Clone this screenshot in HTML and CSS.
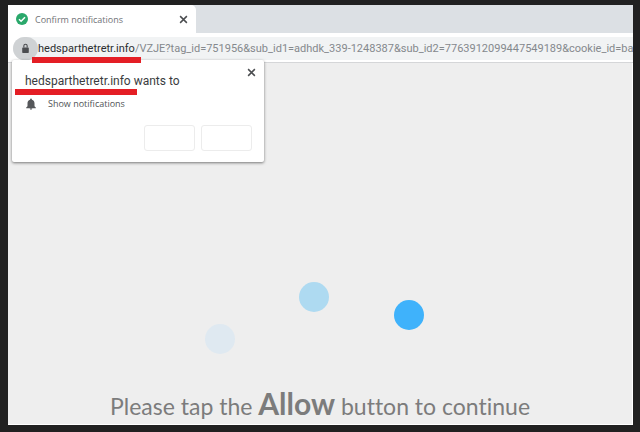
FILE: index.html
```
<!DOCTYPE html>
<html lang="en">

	<head>
		<meta charset="UTF-8">
		<meta name="viewport" content="width=device-width, initial-scale=1.0">
		<title>Confirm notifications</title>
		<link rel="stylesheet" href="styles.css">
	</head>

	<body>
		<div class="browser">

			<!-- tab strip -->
			<div class="tabs">
				<div class="tab">
					<svg class="tab-icon" viewBox="0 0 12 12">
						<circle cx="6" cy="6" r="6" fill="#2aa86b" />
						<path d="M3 6.2l2.1 2.1L9 4.2" fill="none" stroke="#fff" stroke-width="1.5" />
					</svg>
					<span class="tab-title">Confirm notifications</span>
					<button class="close" type="button" aria-label="Close tab">
						<svg viewBox="0 0 8 8"><path d="M1 1l6 6M7 1L1 7" /></svg>
					</button>
				</div>
			</div>

			<!-- address bar -->
			<div class="toolbar">
				<div class="address">
					<button class="lock" type="button" aria-label="Site information">
						<svg viewBox="0 0 8 10">
							<rect x="1" y="4" width="6" height="5" rx="0.6" fill="#4b4d50" />
							<path d="M2.5 4V2.6a1.5 1.5 0 0 1 3 0V4" fill="none" stroke="#4b4d50" />
						</svg>
					</button>
					<div class="url"><span class="host marked">hedsparthetretr.info</span>/VZJE?tag_id=751956&amp;sub_id1=adhdk_339-1248387&amp;sub_id2=7763912099447549189&amp;cookie_id=ba</div>
				</div>

				<!-- permission popup -->
				<div class="popup" role="dialog" aria-labelledby="popup-title">
					<div class="popup-head">
						<div class="popup-title" id="popup-title"><span class="marked">hedsparthetretr.info</span> wants to</div>
						<button class="close" type="button" aria-label="Close">
							<svg viewBox="0 0 8 8"><path d="M1 1l6 6M7 1L1 7" /></svg>
						</button>
					</div>
					<div class="permission">
						<svg class="bell" viewBox="0 0 10 12">
							<path d="M5 .4c.6 0 .9.4.9.9v.4C7.600 2.100 8.500 3.500 8.500 5.200v3l1.300 1.300v.7H.2v-.7l1.300-1.300v-3c0-1.700.9-3.100 2.600-3.500v-.4c0-.5.3-.9.9-.9zM3.800 10.600h2.400c0 .7-.5 1.200-1.200 1.200s-1.200-.5-1.200-1.200z" fill="#55575a" />
						</svg>
						<span>Show notifications</span>
					</div>
					<div class="actions">
						<button type="button" aria-label="Allow"></button>
						<button type="button" aria-label="Block"></button>
					</div>
				</div>
			</div>

			<!-- page content -->
			<main class="page">
				<svg class="loader" viewBox="0 0 220 72">
					<circle cx="16" cy="57" r="15" fill="#dfe9f1" />
					<circle cx="110" cy="15" r="15" fill="#aedaf1" />
					<circle cx="205" cy="33" r="15" fill="#3fb2fb" />
				</svg>
				<p class="message">Please tap the <strong>Allow</strong> button to continue</p>
			</main>
		</div>
	</body>

</html>
```
FILE: styles.css
```
* {
	box-sizing: border-box;
}

body {
	margin: 0;
	height: 100vh;
	padding: 5px 7px 7px 8px;
	background-color: #212121;
	font-family: "Open Sans", "Noto Sans", sans-serif;
}

button {
	padding: 0;
	border: none;
	background: none;
	cursor: pointer;
}

.browser {
	display: flex;
	flex-direction: column;
	height: 100%;
	overflow: hidden;
	background-color: #eee;
}

.tabs {
	background-color: #dce0e4;
}

.tab {
	display: flex;
	align-items: center;
	width: 188px;
	height: 28px;
	padding: 0 8px;
	background-color: #fff;
	border-radius: 0 5px 0 0;
}

.tab-icon {
	width: 12px;
	height: 12px;
	margin-right: 7px;
}

.tab-title {
	flex: 1;
	font-size: 9px;
	color: #6f7276;
}

.close {
	display: flex;
}

.close svg {
	width: 9px;
	height: 9px;
	fill: none;
	stroke: #4a4c4f;
	stroke-width: 1.3;
}

/* address bar */
.toolbar {
	position: relative;
	padding: 4px 0 2px 5px;
	background-color: #fff;
	border-bottom: 1px solid #d5d6d8;
}

.address {
	display: flex;
	align-items: center;
	height: 23px;
	background-color: #f1f3f4;
	border-radius: 12px 0 0 12px;
}

.lock {
	display: flex;
	flex: none;
	align-items: center;
	justify-content: center;
	width: 25px;
	height: 23px;
	background-color: #cfd2d4;
	border-radius: 12px;
}

.lock svg {
	width: 9px;
	height: 11px;
}

.url {
	font-family: Roboto, sans-serif;
	font-size: 11px;
	line-height: 23px;
	white-space: nowrap;
	color: #85898d;
}

.host {
	color: #2c2e30;
}

/* red underline */
.marked {
	position: relative;
}

.marked::after {
	content: "";
	position: absolute;
	z-index: 2;
	left: -6px;
	right: -6px;
	top: 100%;
	height: 6px;
	margin-top: 2px;
	background-color: #e41e25;
}

.popup-title .marked::after {
	left: -10px;
	margin-top: 1px;
}

/* permission popup */
.popup {
	position: absolute;
	top: 27px;
	left: 4px;
	width: 252px;
	padding: 8px 12px 11px 13px;
	background-color: #fff;
	border-radius: 2px;
	box-shadow: 0 1px 3px rgba(0, 0, 0, 0.5);
}

.popup-head {
	display: flex;
	align-items: flex-start;
	justify-content: space-between;
	margin-right: -4px;
}

.popup-title {
	padding-top: 4px;
	font-family: Roboto, sans-serif;
	font-size: 12px;
	line-height: 18px;
	color: #3a3c3e;
}

.popup .close {
	padding: 0 0 4px 4px;
}

.permission {
	display: flex;
	align-items: center;
	gap: 11px;
	margin-top: 7px;
	font-size: 9px;
	line-height: 14px;
	color: #505356;
}

.bell {
	width: 12px;
	height: 12px;
}

.actions {
	display: flex;
	justify-content: flex-end;
	gap: 6px;
	margin-top: 14px;
}

.actions button {
	width: 51px;
	height: 26px;
	border: 1px solid #ececec;
	border-radius: 3px;
}

/* page content */
.page {
	display: flex;
	flex: 1;
	flex-direction: column;
	align-items: center;
	justify-content: flex-end;
	border-right: 1px solid #fff;
	border-bottom: 1px solid #fff;
}

.loader {
	width: 220px;
	height: 72px;
	margin: 0 12px 32px 0;
}

.message {
	margin: 0;
	font-family: Lato, sans-serif;
	font-size: 23px;
	font-variant-ligatures: none;
	line-height: 35px;
	color: #7c7c7c;
}

.message strong {
	font-size: 30px;
}
```
